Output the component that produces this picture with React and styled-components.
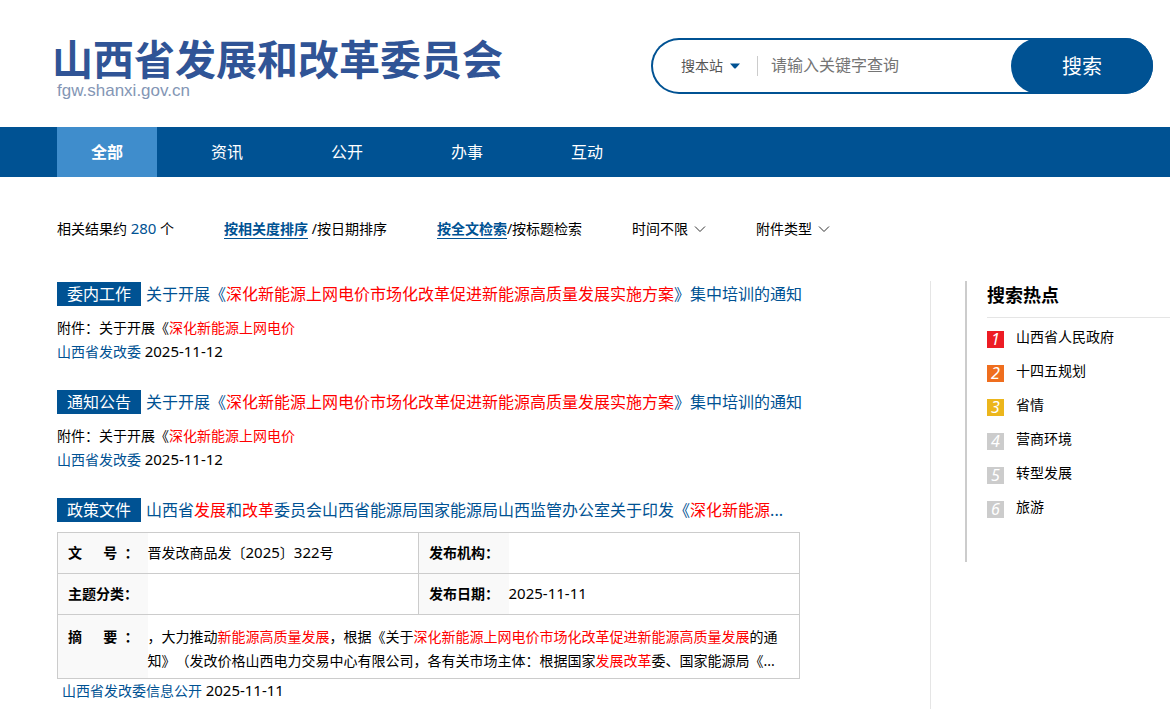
import React from 'react';
import styled, { createGlobalStyle } from 'styled-components';

const BLUE = '#005293';

const tabs = ['全部', '资讯', '公开', '办事', '互动'];

const hotWords = [
  { word: '山西省人民政府', color: '#ed1c24' },
  { word: '十四五规划', color: '#ef6e1e' },
  { word: '省情', color: '#ecb61c' },
  { word: '营商环境', color: '#cccccc' },
  { word: '转型发展', color: '#cccccc' },
  { word: '旅游', color: '#cccccc' },
];

const notices = [
  { type: '委内工作', source: '山西省发改委', date: '2025-11-12' },
  { type: '通知公告', source: '山西省发改委', date: '2025-11-12' },
];

const Chevron = () => (
  <ChevronSvg viewBox="0 0 12 8" aria-hidden="true">
    <path d="M1 1.5 L6 6.5 L11 1.5" />
  </ChevronSvg>
);

const Notice = ({ data }) => (
  <ResultItem>
    <TitleRow>
      <Badge>{data.type}</Badge>
      <Title href="#">
        关于开展《<Hit>深化新能源上网电价市场化改革促进新能源高质量发展实施方案</Hit>》集中培训的通知
      </Title>
    </TitleRow>
    <Desc>
      附件：关于开展《<Hit>深化新能源上网电价</Hit>
    </Desc>
    <Meta>
      <a href="#">{data.source}</a> <Num>{data.date}</Num>
    </Meta>
  </ResultItem>
);

const PolicyFile = () => (
  <ResultItem>
    <TitleRow>
      <Badge>政策文件</Badge>
      <Title href="#">
        山西省<Hit>发展</Hit>和<Hit>改革</Hit>委员会山西省能源局国家能源局山西监管办公室关于印发《<Hit>深化新能源</Hit>...
      </Title>
    </TitleRow>
    <InfoTable>
      <colgroup>
        <LabelCol />
        <ValueCol />
        <LabelCol />
        <col />
      </colgroup>
      <tbody>
        <tr>
          <th scope="row">文&emsp;&nbsp;&nbsp;号&nbsp;&nbsp;：</th>
          <td>
            晋发改商品发〔<Num>2025</Num>〕<Num>322</Num>号
          </td>
          <th scope="row">发布机构：</th>
          <td />
        </tr>
        <tr>
          <th scope="row">主题分类：</th>
          <td />
          <th scope="row">发布日期：</th>
          <td>
            <Num>2025-11-11</Num>
          </td>
        </tr>
        <SummaryRow>
          <th scope="row">摘&emsp;&nbsp;&nbsp;要&nbsp;&nbsp;：</th>
          <td colSpan={3}>
            ，大力推动<Hit>新能源高质量发展</Hit>，根据《关于<Hit>深化新能源上网电价市场化改革促进新能源高质量发展</Hit>
            的通知》（发改价格山西电力交易中心有限公司，各有关市场主体：根据国家<Hit>发展改革</Hit>委、国家能源局《...
          </td>
        </SummaryRow>
      </tbody>
    </InfoTable>
    <Meta $indent>
      <a href="#">山西省发改委信息公开</a> <Num>2025-11-11</Num>
    </Meta>
  </ResultItem>
);

const App = () => {
  return (
    <Page>
      <GlobalStyle />
      <Header>
        <Logo href="#">
          <LogoName>山西省发展和改革委员会</LogoName>
          <LogoDomain>fgw.shanxi.gov.cn</LogoDomain>
        </Logo>
        <SearchForm onSubmit={(e) => e.preventDefault()}>
          <Scope>
            <select aria-label="搜索范围">
              <option>搜本站</option>
            </select>
            <svg viewBox="0 0 10 6" aria-hidden="true">
              <path d="M0 0.5 H10 L5.8 5.2 Q5 6 4.2 5.2 Z" />
            </svg>
          </Scope>
          <SearchInput type="text" aria-label="关键字" placeholder="请输入关键字查询" />
          <SearchButton type="submit">搜索</SearchButton>
        </SearchForm>
      </Header>
      <Nav>
        {tabs.map((tab, i) => (
          <Tab key={tab} href="#" $active={i === 0}>
            {tab}
          </Tab>
        ))}
      </Nav>
      <Filters>
        <span>
          相关结果约 <Count>280</Count> 个
        </span>
        <span>
          <Option type="button" $active>
            按相关度排序
          </Option>{' '}
          /<Option type="button">按日期排序</Option>
        </span>
        <span>
          <Option type="button" $active>
            按全文检索
          </Option>
          /<Option type="button">按标题检索</Option>
        </span>
        <DropButton type="button">
          时间不限
          <Chevron />
        </DropButton>
        <DropButton type="button">
          附件类型
          <Chevron />
        </DropButton>
      </Filters>
      <Content>
        <Results>
          {notices.map((item) => (
            <Notice key={item.type} data={item} />
          ))}
          <PolicyFile />
        </Results>
        <Sidebar>
          <h2>搜索热点</h2>
          <ol>
            {hotWords.map((item, i) => (
              <HotItem key={item.word}>
                <Rank $color={item.color}>{i + 1}</Rank>
                <a href="#">{item.word}</a>
              </HotItem>
            ))}
          </ol>
        </Sidebar>
      </Content>
    </Page>
  );
};
export default App;

const GlobalStyle = createGlobalStyle`
  * {
    box-sizing: border-box;
  }
  body {
    margin: 0;
    background: #fff;
    color: #000;
    font-family: 'Noto Sans', 'Noto Sans CJK SC', sans-serif;
    font-size: 14px;
    line-height: 24px;
    text-spacing-trim: space-all;
  }
  a {
    color: inherit;
    text-decoration: none;
  }
  button, input, select {
    margin: 0;
    padding: 0;
    border: 0;
    background: none;
    color: inherit;
    font: inherit;
  }
  button {
    cursor: pointer;
  }
`;
const Page = styled.div`
  display: flex;
  flex-direction: column;
  min-height: 100vh;
`;
const Header = styled.header`
  display: flex;
  justify-content: space-between;
  align-items: flex-start;
  padding: 38px 17px 25px 52px;
`;
const Logo = styled.a`
  display: flex;
  flex-direction: column;
`;
const LogoName = styled.span`
  color: #305496;
  font-size: 41px;
  font-weight: 700;
  line-height: 42px;
  white-space: nowrap;
`;
const LogoDomain = styled.span`
  padding-left: 5px;
  color: #8496b5;
  font-family: 'Liberation Sans', Arial, sans-serif;
  font-size: 17px;
  line-height: 22px;
`;
const SearchForm = styled.form`
  display: flex;
  width: 502px;
  height: 56px;
  border-radius: 28px;
  box-shadow: inset 0 0 0 2px ${BLUE};
`;
const Scope = styled.div`
  display: flex;
  align-items: center;
  align-self: center;
  height: 20px;
  margin-left: 30px;
  padding-right: 17px;
  border-right: 1px solid #ccc;
  color: #555;

  select {
    width: 49px;
    appearance: none;
    outline: none;
  }
  svg {
    width: 10px;
    height: 6px;
    fill: ${BLUE};
  }
`;
const SearchInput = styled.input`
  flex: 1;
  min-width: 0;
  padding: 0 13px 2px;
  font-size: 16px;
  outline: none;

  &::placeholder {
    color: #757575;
  }
`;
const SearchButton = styled.button`
  width: 142px;
  padding-top: 2px;
  border-radius: 28px;
  background: ${BLUE};
  color: #fff;
  font-size: 20px;
`;
const Nav = styled.nav`
  display: flex;
  gap: 20px;
  padding-left: 57px;
  background: ${BLUE};
`;
const Tab = styled.a`
  width: 100px;
  color: #fff;
  font-size: 16px;
  font-weight: ${({ $active }) => ($active ? 700 : 400)};
  line-height: 50px;
  text-align: center;
  background: ${({ $active }) => ($active ? '#3f8dcc' : 'transparent')};
`;
const Filters = styled.div`
  display: flex;
  gap: 50px;
  padding: 40px 0 40px 57px;
  white-space: nowrap;
`;
const Num = styled.span`
  font-size: 15px;
  line-height: 1;
`;
const Count = styled(Num)`
  color: ${BLUE};
`;
const Option = styled.button`
  color: ${({ $active }) => ($active ? BLUE : 'inherit')};
  font-weight: ${({ $active }) => ($active ? 700 : 400)};
  line-height: 18px;
  border-bottom: ${({ $active }) => ($active ? `1px solid ${BLUE}` : '0')};
`;
const DropButton = styled.button`
  display: flex;
  align-items: center;
  gap: 6px;
`;
const ChevronSvg = styled.svg`
  width: 12px;
  height: 8px;
  fill: none;
  stroke: #333;
`;
const Content = styled.div`
  display: flex;
  flex: 1;
  align-items: stretch;
  gap: 34px;
  padding-left: 57px;
`;
const Results = styled.main`
  flex: 1;
  min-width: 0;
  border-right: 1px solid #e5e5e5;
`;
const ResultItem = styled.article`
  margin-top: 1px;

  & + & {
    margin-top: 26px;
  }
`;
const TitleRow = styled.div`
  display: flex;
  gap: 5px;
  margin-bottom: 10px;
  font-size: 16px;
  white-space: nowrap;
`;
const Badge = styled.span`
  width: 84px;
  background: ${BLUE};
  color: #fff;
  text-align: center;
`;
const Title = styled.a`
  color: ${BLUE};
`;
const Hit = styled.em`
  color: #f00;
  font-style: normal;
`;
const Desc = styled.p`
  margin: 0;
`;
const Meta = styled.div`
  height: 24px;
  padding-left: ${({ $indent }) => ($indent ? '5px' : '0')};

  a {
    color: ${BLUE};
  }
`;
const InfoTable = styled.table`
  width: 100%;
  max-width: 743px;
  table-layout: fixed;
  border-collapse: collapse;
  border: 1px solid #ccc;

  tr {
    height: 41px;
    border-bottom: 1px solid #ccc;
  }
  th {
    padding: 0 0 0 10px;
    border-left: 1px solid #ccc;
    background: #f9f9f9;
    text-align: left;
    white-space: nowrap;
  }
  td {
    padding: 0;
  }
`;
const LabelCol = styled.col`
  width: 90px;
`;
const ValueCol = styled.col`
  width: 271px;
`;
const SummaryRow = styled.tr`
  th {
    padding: 10px 0 5px 10px;
    vertical-align: top;
  }
  td {
    padding: 10px 20px 5px 0;
  }
`;
const Sidebar = styled.aside`
  flex: 0 0 205px;
  align-self: flex-start;
  min-height: 281px;
  padding-left: 20px;
  border-left: 2px solid #ccc;

  h2 {
    margin: 0 0 8px;
    padding: 2px 0 10px;
    border-bottom: 1px solid #e5e5e5;
    font-size: 18px;
    line-height: 24px;
  }
  ol {
    margin: 0;
    padding: 0;
    list-style: none;
  }
`;
const HotItem = styled.li`
  display: flex;
  gap: 12px;
  height: 34px;
  line-height: 22px;
`;
const Rank = styled.span`
  width: 17px;
  height: 17px;
  margin-top: 5px;
  background: ${({ $color }) => $color};
  color: #fff;
  font-size: 16px;
  font-style: italic;
  line-height: 16px;
  text-align: center;
`;
